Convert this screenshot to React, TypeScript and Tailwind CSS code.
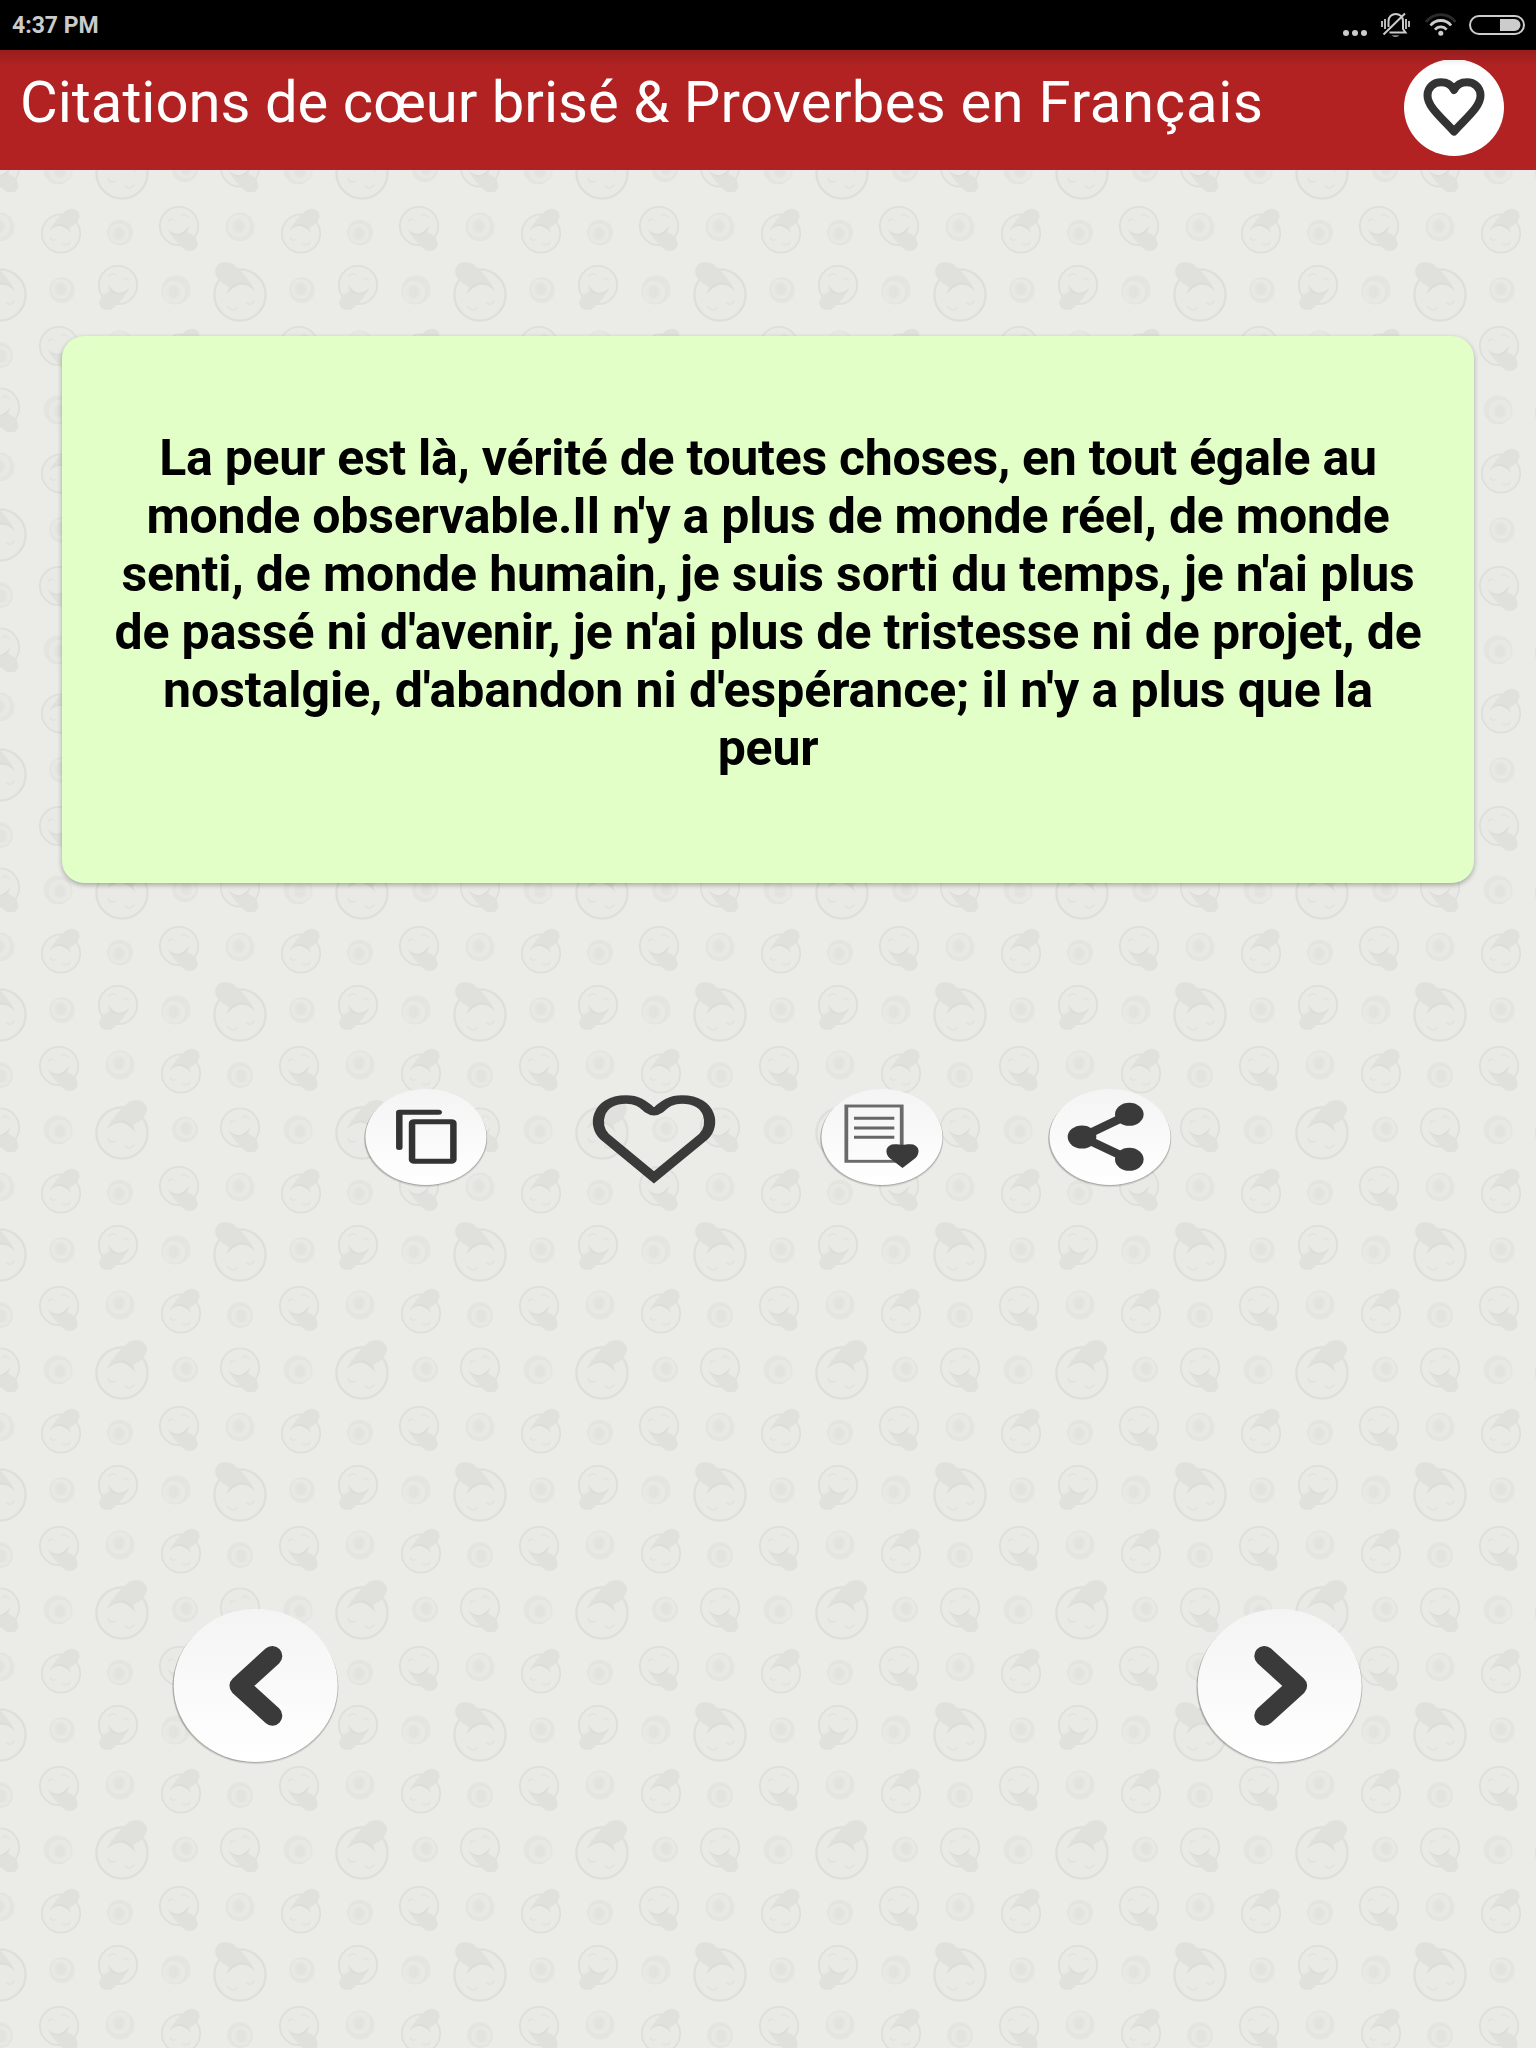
import React from "react";

const INK = "#3a3a3a";

type Head = { x: number; y: number; s: number; fx?: number; fy?: number };
const heads: Head[] = [
  { x: 0, y: 55, s: 1, fx: -1 },
  { x: 122, y: 173, s: 1 },
  { x: 118, y: 45, s: 0.75, fx: -1, fy: -1 },
  { x: 59, y: 106, s: 0.75, fy: -1 },
  { x: 181, y: 113.5, s: 0.75 },
  { x: 0, y: 167.5, s: 0.75, fy: -1 },
  { x: 61, y: 233.5, s: 0.75 },
  { x: 179, y: 226, s: 0.75, fy: -1 },
];
const dots = [
  { x: 62, y: 50, r: 13, dx: -1, dy: -1 },
  { x: 176, y: 50, r: 14.5, dx: -2, dy: 2 },
  { x: 120, y: 105, r: 14.5, dx: -1, dy: -2 },
  { x: 240, y: 115, r: 13, dx: 1, dy: 1 },
  { x: 58, y: 170, r: 14.5, dx: 2, dy: 1 },
  { x: 185, y: 169.5, r: 13, dx: 1, dy: -1 },
  { x: 120, y: 232.5, r: 13, dx: -1, dy: 1 },
  { x: 240, y: 227, r: 14.5, dx: -1, dy: -1 },
];
const shifts = [
  [0, 0],
  [240, 0],
  [-240, 0],
  [0, 240],
  [0, -240],
  [240, -240],
  [-240, -240],
];

function Wallpaper() {
  return (
    <svg className="absolute inset-0 h-full w-full" aria-hidden="true">
      <defs>
        <g id="head">
          <circle r="25.6" fill="#e9eae5" stroke="#dedfda" strokeWidth="2.4" />
          <path
            d="M-15 -4 C-12 -12 -3 -22 5 -29.500 C9 -33.500 18 -34.500 22 -30.500 C26.500 -26 25.500 -20 21 -15 L18 -12 C14 -10 12 -9 11 -7 L14 0 C9 -6 5 -9.500 -1 -10.500 C-7 -10.500 -11 -8 -15 -4Z"
            fill="#e0e1dc"
          />
          <path d="M-15 -4 C-11 -10 -6 -13 0 -12.500 C6 -12 10 -9 14 0 C9 -6 5 -9.500 -1 -10.500 C-7 -10.500 -11 -8 -15 -4Z" fill="#dcddd8" />
          <path d="M-14 6q3 5 7 2M3 13q4 5 9-1" fill="none" stroke="#e2e3de" strokeWidth="1.8" strokeLinecap="round" />
        </g>
        <g id="tile">
          {heads.map((h, i) => (
            <use key={i} href="#head" transform={`translate(${h.x} ${h.y}) scale(${h.s * (h.fx ?? 1)} ${h.s * (h.fy ?? 1)})`} />
          ))}
          {dots.map((d, i) => (
            <g key={i} transform={`translate(${d.x} ${d.y})`}>
              <circle r={d.r} fill="#e4e5e0" />
              <circle cx={d.dx} cy={d.dy} r={d.r - 2.5} fill="#e8e9e4" stroke="#e3e4df" strokeWidth="1" />
              <ellipse cx={d.dx} cy={d.dy} rx="6.5" ry="7" fill="#e5e6e1" />
              <ellipse cx={d.dx} cy={d.dy} rx="4.5" ry="5.5" fill="#e2e3de" />
            </g>
          ))}
        </g>
        <pattern id="paper" width="240" height="240" patternUnits="userSpaceOnUse">
          {shifts.map(([x, y], i) => (
            <use key={i} href="#tile" x={x} y={y} />
          ))}
        </pattern>
      </defs>
      <rect width="100%" height="100%" fill="url(#paper)" />
    </svg>
  );
}

function StatusBar() {
  return (
    <div className="relative flex h-[50px] items-center justify-between bg-black pl-3 pr-[11px]">
      <span className="mt-[2px] whitespace-nowrap text-[23px] leading-[48px] font-bold text-[#cbcbcb]">4:37 PM</span>
      <div className="flex">
        <svg className="mr-[14px]" width="24" height="50" fill="#ccc">
          <circle cx="3" cy="33" r="3" />
          <circle cx="12" cy="33" r="3" />
          <circle cx="21" cy="33" r="3" />
        </svg>
        <svg className="mr-[15px]" width="29" height="50" fill="none" stroke="#ccc" strokeWidth="2">
          <path d="M1 21v6M4 19v10M25 19v10M28 21v6" strokeWidth="1.8" />
          <path d="M7.500 27V21C7.500 11.500 22 11.500 22 21V29L24.500 32.500H8.500M2.500 34.500L24 13.500" />
          <path d="M10.500 35.500h8q-4 2.500-8 0z" fill="#ccc" stroke="none" />
        </svg>
        <svg className="mr-[13px]" width="31" height="50" fill="none" stroke="#ccc" strokeWidth="2.800">
          <path d="M1 22A18.300 18.300 0 0 1 30.500 22" stroke="#2b2b2b" />
          <path d="M5.500 25.500A13.100 13.100 0 0 1 26.100 25.500" />
          <path d="M10 29.700A7.400 7.400 0 0 1 21.600 29.700" />
          <circle cx="15.800" cy="33.300" r="2.500" fill="#ccc" stroke="none" />
        </svg>
        <svg width="56" height="50">
          <rect x="1" y="16" width="54" height="18" rx="9" fill="none" stroke="#ccc" strokeWidth="2" />
          <path d="M31 19h14.500a6 6 0 0 1 0 12H31z" fill="#ccc" />
        </svg>
      </div>
    </div>
  );
}

function Header() {
  return (
    <header className="relative flex h-[120px] justify-between bg-[#b22222] pl-5 pr-8">
      <div className="absolute inset-x-0 top-0 h-4 bg-gradient-to-b from-black/15 to-transparent" />
      <h1 className="mt-[18px] whitespace-nowrap text-[58px] leading-[68px] font-normal text-white">
        Citations de cœur brisé &amp; <span className="tracking-[0.280px]">Proverbes en </span>
        <span className="tracking-[0.700px]">Français</span>
      </h1>
      <button className="mt-[10px] h-[96px] w-[100px]" aria-label="Favoris">
        <svg width="100" height="96">
          <ellipse cx="50" cy="47.500" rx="50" ry="48.500" fill="#fff" />
          <path
            d="M50 71.500C38 58 23.500 47 23.500 35.500C23.500 27 30 22.300 37 22.300C43 22.300 47.500 25 50 30C52.500 25 57 22.300 63 22.300C70 22.300 76.500 27 76.500 35.500C76.500 47 62 58 50 71.500Z"
            fill="none"
            stroke="#333"
            strokeWidth="8"
            strokeLinejoin="round"
          />
        </svg>
      </button>
    </header>
  );
}

const lines = [
  { text: "La peur est là, vérité de toutes choses, en tout égale au", cls: "tracking-[-0.280px]" },
  { text: "monde observable.Il n'y a plus de monde réel, de monde", cls: "tracking-[-0.220px]" },
  { text: "senti, de monde humain, je suis sorti du temps, je n'ai plus", cls: "tracking-[-0.160px]" },
  { text: "de passé ni d'avenir, je n'ai plus de tristesse ni de projet, de", cls: "tracking-[-0.110px]" },
  { text: "nostalgie, d'abandon ni d'espérance; il n'y a plus que la", cls: "tracking-[-0.070px]" },
  { text: "peur", cls: "tracking-[-0.200px]" },
];

function Disc({ cx, ry, rx }: { cx: number; rx: number; ry: number }) {
  return (
    <>
      <ellipse cx={cx - 0.3} cy={ry + 2} rx={rx + 1.2} ry={ry + 0.2} fill="#000" opacity="0.1" />
      <ellipse cx={cx - 0.3} cy={ry + 1} rx={rx + 0.8} ry={ry} fill="#000" opacity="0.18" />
      <ellipse cx={cx} cy={ry} rx={rx} ry={ry} fill="url(#disc)" />
    </>
  );
}

function Actions() {
  return (
    <div className="flex justify-center gap-[100px]">
      <button aria-label="Copier">
        <svg width="128" height="100">
          <defs>
            <linearGradient id="disc" x1="0" y1="0" x2="0" y2="1">
              <stop offset="0" stopColor="#f4f4f4" />
              <stop offset="1" stopColor="#ffffff" />
            </linearGradient>
          </defs>
          <Disc cx={64} rx={60.5} ry={48} />
          <g transform="scale(1.3 1)" fill="none" stroke="#333" strokeWidth="5" strokeLinejoin="round" strokeLinecap="round">
            <path d="M28.700 58.500V23.300H59" />
            <rect x="38.500" y="32.700" width="31.800" height="39.500" rx="1.500" />
          </g>
        </svg>
      </button>
      <button aria-label="Aimer">
        <svg width="128" height="100">
          <path
            transform="scale(1.3 1)"
            d="M49.200 88.300L11.500 48C2 37 5 10.500 27.700 10.500C38 10.500 42 17 45.500 20.500Q49.200 24 52.900 20.500C56.400 17 60.400 10.500 70.800 10.500C93.500 10.500 96.500 37 87 48Z"
            fill="none"
            stroke={INK}
            strokeWidth="8.500"
          />
        </svg>
      </button>
      <button aria-label="Liste des favoris">
        <svg width="128" height="100">
          <Disc cx={64} rx={60.5} ry={48} />
          <g transform="scale(1.3 1)">
            <rect x="21.800" y="17" width="42.600" height="55.300" fill="none" stroke="#6a6a6a" strokeWidth="2.900" />
            <path d="M27.700 29.300H58.700M27.700 39H58.700M27.700 48.300H58.700" stroke="#666" strokeWidth="3" />
          </g>
          <path
            d="M84.500 79L71.500 69C66 63.500 68 55.200 76.500 55.200C80.500 55.200 82 55.800 84.500 55.800C87 55.800 88.500 55.200 92.500 55.200C101 55.200 103 63.500 97.500 69Z"
            fill={INK}
          />
        </svg>
      </button>
      <button aria-label="Partager">
        <svg width="128" height="100">
          <Disc cx={64} rx={60.5} ry={48} />
          <path d="M83.300 25.300L36 48L83.300 70.300" fill="none" stroke={INK} strokeWidth="8.500" />
          <g fill={INK}>
            <ellipse cx="36" cy="48" rx="14.300" ry="11.500" />
            <ellipse cx="83.300" cy="25.300" rx="14.300" ry="11.500" />
            <ellipse cx="83.300" cy="70.300" rx="14.300" ry="11.500" />
          </g>
        </svg>
      </button>
    </div>
  );
}

function NavButton({ label, d }: { label: string; d: string }) {
  return (
    <button aria-label={label}>
      <svg width="170" height="158">
        <Disc cx={84.7} rx={82} ry={76.5} />
        <path d={d} fill="none" stroke={INK} strokeWidth="20" strokeLinecap="round" strokeLinejoin="round" />
      </svg>
    </button>
  );
}

export default function App() {
  return (
    <div className="relative isolate h-[2048px] w-[1536px] overflow-hidden bg-[#ebece7] font-[Roboto,sans-serif]">
      <Wallpaper />
      <StatusBar />
      <Header />
      <main className="relative">
        <section className="mx-[62px] mt-[166px] flex h-[547px] flex-col items-center rounded-[22px] bg-[#e1ffc7] pt-[93px] text-[50px] leading-[58px] font-bold text-black shadow-[0_2px_5px_rgba(0,0,0,0.3)]">
          {lines.map((l) => (
            <p key={l.text} className={`whitespace-nowrap ${l.cls}`}>
              {l.text}
            </p>
          ))}
        </section>
        <div className="mt-[206px] h-[100px]">
          <Actions />
        </div>
        <nav className="mt-[420px] grid grid-cols-3 justify-items-center">
          <NavButton label="Précédent" d="M101.300 47L68.500 76.800L101.300 106.700" />
          <span />
          <NavButton label="Suivant" d="M69.300 47L102.100 76.800L69.300 106.700" />
        </nav>
      </main>
    </div>
  );
}
